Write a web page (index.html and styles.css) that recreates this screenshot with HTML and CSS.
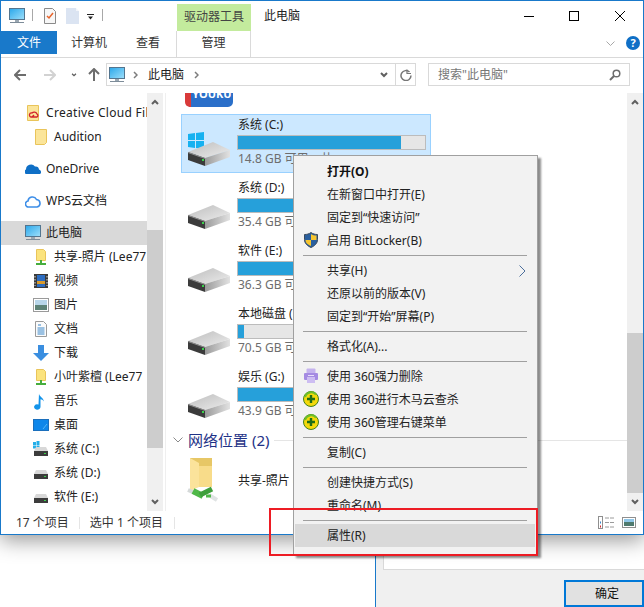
FILE: index.html
```html
<!DOCTYPE html>
<html lang="zh-CN">
<head>
<meta charset="utf-8">
<title>此电脑</title>
<link rel="stylesheet" href="styles.css">
</head>
<body>
<svg class="defs" aria-hidden="true">
  <defs>
    <linearGradient id="gTop" x1="0" y1="0" x2="1" y2="1"><stop offset="0" stop-color="#bdbdbd"/><stop offset="1" stop-color="#ececec"/></linearGradient>
    <linearGradient id="gSide" x1="0" y1="0" x2="1" y2="0"><stop offset="0" stop-color="#9a9a9a"/><stop offset="1" stop-color="#e2e2e2"/></linearGradient>
    <linearGradient id="gScreen" x1="0" y1="0" x2="1" y2="1"><stop offset="0" stop-color="#2aa7ea"/><stop offset="1" stop-color="#9fe0fb"/></linearGradient>
    <symbol id="drive" viewBox="0 0 42 24">
      <polygon points="0,10 25,0 42,8 17,16" fill="url(#gTop)"/>
      <polygon points="0,10 17,16 17,24 0,18" fill="#3b3b3b"/>
      <polygon points="0,10 17,16 17,17 0,11" fill="#8f8f8f"/>
      <polygon points="17,16 42,8 42,15 17,24" fill="url(#gSide)"/>
      <rect x="14" y="17" width="2" height="2" fill="#39d34b"/>
    </symbol>
    <symbol id="mini" viewBox="0 0 14 9">
      <path d="M2 0h10l2 4H0z" fill="#d8d8d8"/>
      <rect x="0" y="4" width="14" height="5" fill="#3c3c3c"/>
      <rect x="10" y="6" width="2" height="1" fill="#39d34b"/>
    </symbol>
    <symbol id="monitor" viewBox="0 0 16 16">
      <rect x="0.5" y="0.5" width="15" height="11" fill="url(#gScreen)" stroke="#53758f"/>
      <rect x="6" y="12" width="4" height="2" fill="#9aa7b2"/>
      <rect x="1" y="14" width="14" height="1" fill="#7d8c99"/>
    </symbol>
    <symbol id="folder" viewBox="0 0 12 16">
      <path d="M0.5 0.5h11v13l-2 2h-9z" fill="#fbe59a" stroke="#e9c45a"/>
    </symbol>
    <symbol id="sharefolder" viewBox="0 0 10 16">
      <path d="M0.5 0.5h7l2 2v9h-9z" fill="#fbe37d" stroke="#e9c45a"/>
      <rect x="4" y="11" width="2" height="3" fill="#47ad3d"/>
      <rect x="0" y="14" width="10" height="2" fill="#47ad3d"/>
    </symbol>
    <symbol id="pluscircle" viewBox="0 0 16 16">
      <circle cx="8" cy="8" r="7.5" fill="#f4d90a" stroke="#41811b"/>
      <path d="M2 6a6.500 6.500 0 0 1 11-2.500" fill="none" stroke="#6cbf2a" stroke-width="2"/>
      <path d="M8 4v8M4 8h8" stroke="#1f6d16" stroke-width="2.400"/>
    </symbol>
    <symbol id="chev-up" viewBox="0 0 8 6"><path d="M1 5l3-3 3 3" fill="none" stroke="#606060" stroke-width="2"/></symbol>
    <symbol id="chev-down" viewBox="0 0 8 6"><path d="M1 1l3 3 3-3" fill="none" stroke="#606060" stroke-width="2"/></symbol>
    <symbol id="crumb" viewBox="0 0 5 8"><path d="M1 1l3 3-3 3" fill="none" stroke="#7d7d7d" stroke-width="1.500"/></symbol>
  </defs>
</svg>

<div class="page">
  <div class="window">
    <div class="titlebar">
      <svg class="qa-monitor" width="16" height="16"><use href="#monitor"/></svg>
      <span class="qa-sep"></span>
      <svg class="qa-note" width="12" height="16" viewBox="0 0 12 16">
        <path d="M0.500 0.500h8l3 3v12h-11z" fill="#f7f7f7" stroke="#8a8a8a"/>
        <path d="M3 8l2 2 4-5" fill="none" stroke="#e8632a" stroke-width="1.500"/>
      </svg>
      <svg class="qa-doc" width="13" height="16" viewBox="0 0 13 16">
        <path d="M0 0h10v3h3v13H0z" fill="#dbe4f2"/><path d="M10 0l3 3h-3z" fill="#f2f5fa"/>
      </svg>
      <svg class="qa-drop" width="7" height="6" viewBox="0 0 7 6">
        <rect width="7" height="1" fill="#222"/><path d="M1 2.500h5L3.500 5.500z" fill="#222"/>
      </svg>
      <span class="qa-sep qa-sep-end"></span>
      <div class="tool-tab">驱动器工具</div>
      <div class="window-title">此电脑</div>
      <div class="controls">
        <svg width="10" height="10" viewBox="0 0 10 10"><rect y="5" width="10" height="1" fill="#000"/></svg>
        <svg width="10" height="10" viewBox="0 0 10 10"><rect x="0.500" y="0.500" width="9" height="9" fill="none" stroke="#000"/></svg>
        <svg width="10" height="10" viewBox="0 0 10 10"><path d="M0 0l10 10M10 0L0 10" stroke="#000" stroke-width="1"/></svg>
      </div>
    </div>

    <div class="tabs">
      <div class="tab-file">文件</div>
      <div class="tab tab-computer">计算机</div>
      <div class="tab tab-view">查看</div>
      <div class="tab-manage">管理</div>
      <svg class="ribbon-chev" width="9" height="5" viewBox="0 0 9 5"><path d="M0.500 0.500l4 4 4-4" fill="none" stroke="#a8a8a8"/></svg>
      <div class="help">?</div>
    </div>

    <div class="navbar">
      <svg class="nav-back" width="12" height="12" viewBox="0 0 12 12"><path d="M6 1L1 6l5 5M1 6h11" fill="none" stroke="#6d6d6d" stroke-width="2"/></svg>
      <svg class="nav-forward" width="12" height="12" viewBox="0 0 12 12"><path d="M6 1l5 5-5 5M11 6H0" fill="none" stroke="#d2d2d2" stroke-width="2"/></svg>
      <svg class="nav-recent" width="6" height="4" viewBox="0 0 8 6"><use href="#chev-down"/></svg>
      <svg class="nav-up" width="12" height="13" viewBox="0 0 12 13"><path d="M1 6l5-5 5 5M6 1v12" fill="none" stroke="#6d6d6d" stroke-width="2"/></svg>
      <div class="address">
        <svg class="addr-icon" width="16" height="16"><use href="#monitor"/></svg>
        <svg class="addr-crumb" width="5" height="8"><use href="#crumb"/></svg>
        <span class="addr-text">此电脑</span>
        <svg class="addr-crumb" width="5" height="8"><use href="#crumb"/></svg>
        <svg class="addr-drop" width="8" height="6"><use href="#chev-down"/></svg>
        <div class="addr-refresh">
          <svg width="12" height="12" viewBox="0 0 12 12"><path d="M9.500 3A5 5 0 1 0 11 6.500" fill="none" stroke="#777" stroke-width="1.500"/><path d="M7 0.500v4h4" fill="none" stroke="#777" stroke-width="1.200"/></svg>
        </div>
      </div>
      <div class="search">
        <span>搜索"此电脑"</span>
        <svg width="12" height="12" viewBox="0 0 12 12"><circle cx="7.500" cy="4.500" r="3.300" fill="none" stroke="#6d6d6d" stroke-width="1.500"/><path d="M5 7l-4 4" stroke="#6d6d6d" stroke-width="2"/></svg>
      </div>
    </div>

    <div class="body">
      <nav class="sidebar">
        <div class="row row-top row-first">
          <svg width="16" height="16" viewBox="0 0 16 16"><path d="M2.500 0.500h11v15h-11z" fill="#fbe59a" stroke="#e9c45a"/><path d="M6 12a2 2 0 0 1 1-4 3 3 0 0 1 5 1 1.700 1.700 0 0 1 0 3z M9 10l-2 2" fill="none" stroke="#d2232a" stroke-width="1.300"/></svg>
          <span>Creative Cloud Files</span>
        </div>
        <div class="row">
          <svg width="16" height="16" viewBox="-2 0 16 16"><use href="#folder" width="12" height="16"/></svg>
          <span>Audition</span>
        </div>
        <div class="row row-top row-onedrive">
          <svg width="16" height="16" viewBox="0 0 16 16"><path d="M1 13a2.500 2.500 0 0 1 0-4.500 5 5 0 0 1 9-3 3.500 3.500 0 0 1 4 3 2.500 2.500 0 0 1 1 4.500z" fill="#0f6fc6"/></svg>
          <span>OneDrive</span>
        </div>
        <div class="row row-top row-wps">
          <svg width="16" height="16" viewBox="0 0 16 16"><path d="M4 14a3 3 0 0 1-1-6 4.500 4.500 0 0 1 8.500-1.500A3.800 3.800 0 0 1 12 14z" fill="none" stroke="#3d8ee8" stroke-width="1.600"/></svg>
          <span>WPS云文档</span>
        </div>
        <div class="row row-top row-pc">
          <svg width="16" height="16"><use href="#monitor"/></svg>
          <span>此电脑</span>
        </div>
        <div class="row">
          <svg width="16" height="16" viewBox="-3 0 16 16"><use href="#sharefolder" width="10" height="16"/></svg>
          <span>共享-照片 (Lee77</span>
        </div>
        <div class="row">
          <svg width="16" height="16" viewBox="0 0 16 16"><rect x="1" y="1" width="14" height="14" fill="#3a3a3a"/><rect x="4" y="2" width="8" height="12" fill="#2d6cc0"/><rect x="4" y="8" width="8" height="3" fill="#d99a2b"/><path d="M2 3v10M14 3v10" stroke="#ddd" stroke-dasharray="1.500 1.500"/></svg>
          <span>视频</span>
        </div>
        <div class="row">
          <svg width="16" height="16" viewBox="0 0 16 16"><rect x="0.500" y="1.500" width="15" height="13" fill="#fff" stroke="#9a9a9a"/><rect x="2" y="3" width="12" height="5" fill="#b8d6ea"/><rect x="2" y="8" width="12" height="5" fill="#5d8277"/></svg>
          <span>图片</span>
        </div>
        <div class="row">
          <svg width="16" height="16" viewBox="0 0 16 16"><path d="M2.500 0.500h8l3 3v12h-11z" fill="#fbfbfb" stroke="#9a9a9a"/><path d="M5 4h3M4.500 7h7M4.500 9h7M4.500 11h7M4.500 13h7" stroke="#3a87c9"/></svg>
          <span>文档</span>
        </div>
        <div class="row">
          <svg width="16" height="16" viewBox="0 0 16 16"><path d="M5 0h6v8h5l-8 8-8-8h5z" fill="#3a8ee0"/></svg>
          <span>下载</span>
        </div>
        <div class="row">
          <svg width="16" height="16" viewBox="-3 0 16 16"><use href="#sharefolder" width="10" height="16"/></svg>
          <span>小叶紫檀 (Lee77</span>
        </div>
        <div class="row">
          <svg width="16" height="17" viewBox="0 0 16 17"><path d="M6 0.500c0 3 4.500 4 5 8-1-1.500-2.500-2-3.500-2.200V14a3.200 2.700 0 1 1-2-2.500z" fill="#1494ea"/></svg>
          <span>音乐</span>
        </div>
        <div class="row">
          <svg width="16" height="12" viewBox="0 0 16 12"><rect width="16" height="12" fill="#0f87ea"/><rect x="0.500" y="0.500" width="15" height="11" fill="none" stroke="#1b6fbc"/><path d="M10 10l4-5" stroke="#58b6f5"/></svg>
          <span>桌面</span>
        </div>
        <div class="row">
          <svg width="16" height="16" viewBox="0 0 16 16"><g fill="#25aee8"><rect x="0" y="1" width="3" height="3"/><rect x="3.500" y="0" width="3" height="4"/><rect x="0" y="4.500" width="3" height="3"/><rect x="3.500" y="4.500" width="3" height="3.500"/></g><use href="#mini" x="1" y="6" width="14" height="9"/></svg>
          <span>系统 (C:)</span>
        </div>
        <div class="row">
          <svg width="16" height="16" viewBox="0 0 16 16"><use href="#mini" x="1" y="5" width="14" height="9"/></svg>
          <span>系统 (D:)</span>
        </div>
        <div class="row">
          <svg width="16" height="16" viewBox="0 0 16 16"><use href="#mini" x="1" y="5" width="14" height="9"/></svg>
          <span>软件 (E:)</span>
        </div>
      </nav>
      <div class="scrollbar scrollbar-left">
        <svg class="sb-up" width="8" height="6"><use href="#chev-up"/></svg>
        <div class="sb-space-left"></div>
        <div class="sb-thumb sb-thumb-left"></div>
        <div class="sb-fill"></div>
        <svg class="sb-down" width="8" height="6"><use href="#chev-down"/></svg>
      </div>
      <div class="divider"></div>

      <main class="main">
        <div class="app-icon"><span>YOUKU</span></div>
        <div class="drive drive-selected">
          <svg class="drive-icon" width="44" height="34" viewBox="0 0 44 34">
            <g fill="#16b1f0"><polygon points="0,2 7,1 7,8 0,8"/><polygon points="8,1 16,0 16,8 8,8"/><polygon points="0,9 7,9 7,16 0,15"/><polygon points="8,9 16,9 16,17 8,16"/></g>
            <use href="#drive" y="10" width="42" height="24"/>
          </svg>
          <div class="drive-info">
            <div class="drive-name">系统 (C:)</div>
            <div class="bar"><div class="bar-fill fill-c"></div></div>
            <div class="drive-free">14.8 GB 可用，共</div>
          </div>
        </div>
        <div class="drive">
          <svg class="drive-icon" width="44" height="34" viewBox="0 0 44 34"><use href="#drive" y="10" width="42" height="24"/></svg>
          <div class="drive-info">
            <div class="drive-name">系统 (D:)</div>
            <div class="bar"><div class="bar-fill fill-d"></div></div>
            <div class="drive-free">35.4 GB 可用</div>
          </div>
        </div>
        <div class="drive">
          <svg class="drive-icon" width="44" height="34" viewBox="0 0 44 34"><use href="#drive" y="10" width="42" height="24"/></svg>
          <div class="drive-info">
            <div class="drive-name">软件 (E:)</div>
            <div class="bar"><div class="bar-fill fill-d"></div></div>
            <div class="drive-free">36.3 GB 可用</div>
          </div>
        </div>
        <div class="drive">
          <svg class="drive-icon" width="44" height="34" viewBox="0 0 44 34"><use href="#drive" y="10" width="42" height="24"/></svg>
          <div class="drive-info">
            <div class="drive-name">本地磁盘 (F:)</div>
            <div class="bar"><div class="bar-fill fill-f"></div></div>
            <div class="drive-free">70.5 GB 可用</div>
          </div>
        </div>
        <div class="drive">
          <svg class="drive-icon" width="44" height="34" viewBox="0 0 44 34"><use href="#drive" y="10" width="42" height="24"/></svg>
          <div class="drive-info">
            <div class="drive-name">娱乐 (G:)</div>
            <div class="bar"><div class="bar-fill fill-d"></div></div>
            <div class="drive-free">43.9 GB 可用</div>
          </div>
        </div>
        <div class="section">
          <svg width="10" height="6" viewBox="0 0 10 6"><path d="M0.500 0.500L5 5l4.500-4.500" fill="none" stroke="#8a8a8a"/></svg>
          <span class="section-title">网络位置 (2)</span>
          <span class="section-line"></span>
        </div>
        <div class="net-item">
          <svg width="34" height="46" viewBox="0 0 34 46">
            <path d="M5 0h22v28H5z" fill="#e7c766"/>
            <path d="M5 0l9 5v24l-9 4z" fill="#fbe39b"/>
            <path d="M14 8h13v21H14z" fill="#f8dc8a"/>
            <path d="M3 32l7 3" stroke="#d5d9d9" stroke-width="4"/>
            <path d="M8 33l10 5" stroke="#4fb848" stroke-width="6"/>
            <path d="M15 37l12-6" stroke="#3f9f3c" stroke-width="5"/>
            <path d="M24 37l8 5" stroke="#dfe3e3" stroke-width="4"/>
            <path d="M21 38l5 0" stroke="#4fb848" stroke-width="3"/>
          </svg>
          <span>共享-照片 (Lee77)</span>
        </div>
      </main>
      <div class="scrollbar scrollbar-right">
        <svg class="sb-up" width="8" height="6"><use href="#chev-up"/></svg>
        <div class="sb-space-right"></div>
        <div class="sb-thumb sb-thumb-right"></div>
        <svg class="sb-down" width="8" height="6"><use href="#chev-down"/></svg>
      </div>
    </div>

    <div class="status">
      <span class="status-a">17 个项目</span>
      <span class="status-sep"></span>
      <span class="status-b">选中 1 个项目</span>
      <span class="status-sep"></span>
      <svg class="view-details" width="17" height="13" viewBox="0 0 17 13">
        <rect x="0.500" y="0.500" width="4" height="12" fill="#fff" stroke="#8f8f8f"/>
        <path d="M7 2h10M7 6.500h10M7 11h10" stroke="#9a9a9a" stroke-dasharray="4 1"/>
        <rect x="2" y="5.500" width="1" height="2" fill="#3a87c9"/><rect x="2" y="9.500" width="1" height="2" fill="#d2232a"/>
      </svg>
      <svg class="view-thumb" width="14" height="11" viewBox="0 0 14 11">
        <rect x="0.500" y="0.500" width="13" height="10" fill="#fff" stroke="#8f8f8f"/>
        <rect x="2" y="2" width="10" height="3" fill="#8fc6e8"/><rect x="2" y="5" width="10" height="4" fill="#4f7a6e"/>
      </svg>
    </div>
  </div>

  <div class="below">
    <div class="blank"></div>
    <div class="dialog">
      <div class="dialog-sheet"></div>
      <div class="dialog-actions"><div class="ok">确定</div></div>
    </div>
  </div>

  <div class="menu">
    <div class="mi mi-bold"><span>打开(O)</span></div>
    <div class="mi"><span>在新窗口中打开(E)</span></div>
    <div class="mi"><span>固定到“快速访问”</span></div>
    <div class="mi">
      <svg class="mi-icon" width="16" height="16" viewBox="0 0 16 16">
        <path d="M8 0.500c2 1.500 4 2 6.500 2v5c0 4-3 6.500-6.500 8-3.500-1.500-6.500-4-6.500-8v-5c2.500 0 4.500-.5 6.500-2z" fill="#2a5f9e" stroke="#3b4a5c"/>
        <path d="M8 2v6h5.500v-4.500c-2 0-4-.5-5.500-1.500zM8 8v6c-3-1.200-5.500-3-5.500-6z" fill="#f7c52e"/>
      </svg>
      <span>启用 BitLocker(B)</span>
    </div>
    <div class="msep"></div>
    <div class="mi mi-sub"><span>共享(H)</span>
      <svg class="mi-arrow" width="7" height="12" viewBox="0 0 7 12"><path d="M0.500 0.500L6 6l-5.500 5.500" fill="none" stroke="#4c6f9c"/></svg>
    </div>
    <div class="mi"><span>还原以前的版本(V)</span></div>
    <div class="mi"><span>固定到“开始”屏幕(P)</span></div>
    <div class="msep"></div>
    <div class="mi"><span>格式化(A)...</span></div>
    <div class="msep"></div>
    <div class="mi">
      <svg class="mi-icon" width="16" height="16" viewBox="0 0 16 16">
        <rect x="3.500" y="0.500" width="9" height="5" rx="1" fill="#c5b3ee"/><rect x="1" y="5" width="14" height="7" rx="1" fill="#a58be2"/><rect x="4" y="9" width="8" height="6" fill="#cdbdf2"/><rect x="5" y="7" width="6" height="1" fill="#e8e0fa"/>
      </svg>
      <span>使用 360强力删除</span>
    </div>
    <div class="mi"><svg class="mi-icon" width="16" height="16"><use href="#pluscircle"/></svg><span>使用 360进行木马云查杀</span></div>
    <div class="mi"><svg class="mi-icon" width="16" height="16"><use href="#pluscircle"/></svg><span>使用 360管理右键菜单</span></div>
    <div class="msep"></div>
    <div class="mi"><span>复制(C)</span></div>
    <div class="msep"></div>
    <div class="mi"><span>创建快捷方式(S)</span></div>
    <div class="mi"><span>重命名(M)</span></div>
    <div class="msep"></div>
    <div class="mi mi-hover"><span>属性(R)</span></div>
  </div>
  <div class="callout"></div>
</div>
</body>
</html>
```
FILE: styles.css
```css
* { box-sizing: border-box; }
html, body { margin: 0; padding: 0; }
body {
  background: #fff;
  color: #1e1e1e;
  font: 12px/16px "Noto Sans", "Noto Sans CJK SC", sans-serif;
  overflow: hidden;
}
svg { display: block; flex: none; }
.defs { position: absolute; width: 0; height: 0; }

.page { position: relative; width: 644px; height: 607px; overflow: hidden; }

/* window */
.window {
  position: relative;
  z-index: 1;
  width: 644px;
  height: 535px;
  background: #fff;
  border: 1px solid #1979ca;
  box-shadow: 0 5px 20px rgba(0, 0, 0, .42);
  display: flex;
  flex-direction: column;
}

/* title bar */
.titlebar { height: 30px; display: flex; align-items: center; flex: none; }
.qa-monitor { margin-left: 8px; margin-top: -1px; }
.qa-sep { width: 1px; height: 12px; background: #a8a8a8; margin-left: 7px; margin-top: -2px; }
.qa-note { margin-left: 11px; margin-top: -1px; }
.qa-doc { margin-left: 10px; margin-top: -1px; }
.qa-drop { margin-left: 8px; margin-top: 1px; }
.qa-sep-end { margin-left: 8px; }
.tool-tab {
  align-self: flex-end;
  width: 74px;
  height: 27px;
  margin-left: 74px;
  background: #c3eb9d;
  color: #444;
  text-align: center;
  line-height: 26px;
}
.window-title { margin-left: 13px; margin-top: 0; color: #222; }
.controls { margin-left: auto; margin-right: 18px; display: flex; gap: 35px; }
.controls svg:nth-child(2) { margin-right: 1px; }

/* tabs */
.tabs {
  height: 27px;
  flex: none;
  display: flex;
  align-items: flex-start;
  border-bottom: 1px solid #d9d9d9;
  position: relative;
}
.tab-file { width: 56px; height: 23px; background: #1979ca; color: #fff; text-align: center; line-height: 23px; }
.tab { line-height: 23px; color: #333; }
.tab-computer { margin-left: 14px; }
.tab-view { margin-left: 29px; }
.tab-manage {
  width: 75px;
  height: 26px;
  margin-left: 16px;
  background: #fff;
  border: 1px solid #dadada;
  border-width: 0 1px;
  text-align: center;
  line-height: 23px;
  color: #333;
}
.ribbon-chev { margin-left: auto; margin-top: 10px; }
.help {
  width: 14px;
  height: 14px;
  margin: 5px 3px 0 11px;
  border-radius: 50%;
  background: #0f6fc6;
  color: #fff;
  font-weight: 700;
  font-size: 11px;
  line-height: 14px;
  text-align: center;
}

/* navigation */
.navbar { height: 35px; flex: none; display: flex; align-items: flex-start; padding-top: 5px; }
.nav-back { margin: 6px 0 0 13px; }
.nav-forward { margin: 6px 0 0 18px; }
.nav-recent { margin: 10px 0 0 15px; }
.nav-up { margin: 5px 0 0 11px; }
.address {
  width: 310px;
  height: 23px;
  margin-left: 6px;
  border: 1px solid #d9d9d9;
  display: flex;
  align-items: center;
}
.addr-icon { margin-left: 2px; }
.addr-crumb { margin-left: 8px; }
.addr-text { margin-left: 10px; color: #222; }
.addr-text + .addr-crumb { margin-left: 10px; }
.addr-drop { margin-left: auto; margin-right: 7px; }
.addr-refresh {
  width: 20px;
  height: 100%;
  border-left: 1px solid #d9d9d9;
  display: flex;
  align-items: center;
  justify-content: center;
}
.search {
  width: 202px;
  height: 23px;
  margin-left: 12px;
  border: 1px solid #d9d9d9;
  display: flex;
  align-items: center;
  justify-content: space-between;
  padding: 0 8px 0 9px;
  color: #777;
}

/* body */
.body { height: 418px; flex: none; display: flex; }
.sidebar { width: 146px; flex: none; overflow: hidden; padding-top: 8px; color: #222; }
.row {
  height: 24px;
  display: flex;
  align-items: center;
  gap: 5px;
  padding-left: 32px;
  white-space: nowrap;
}
.row-top { padding-left: 24px; }
.row-first span { letter-spacing: .3px; }
.row-onedrive { margin-top: 8px; }
.row-wps { margin-top: 8px; }
.row-pc { margin-top: 8px; background: #d9d9d9; }

.scrollbar {
  width: 16px;
  flex: none;
  background: #f0f0f0;
  display: flex;
  flex-direction: column;
  align-items: center;
}
.sb-up { margin-top: 6px; margin-bottom: 6px; }
.sb-down { margin-top: 6px; margin-bottom: 6px; }
.sb-thumb { width: 16px; background: #cdcdcd; }
.sb-space-left { height: 119px; flex: none; }
.sb-thumb-left { height: 218px; flex: none; }
.sb-fill { flex: 1; }
.sb-space-right { height: 222px; flex: none; }
.sb-thumb-right { flex: 1; }
.divider { width: 1px; margin-left: 2px; background: #efefef; flex: none; }

/* main */
.main { flex: 1; min-width: 0; overflow: hidden; padding-left: 15px; color: #222; }
.app-icon {
  width: 48px;
  height: 14px;
  margin-left: 4px;
  margin-bottom: 7px;
  background: #2a6fc9;
  border-left: 6px solid #d93a3a;
  border-radius: 0 0 5px 5px;
  overflow: hidden;
  color: #fff;
  font-weight: 700;
  font-size: 11px;
  line-height: 2px;
  text-align: center;
}
.drive {
  width: 250px;
  height: 59px;
  margin-bottom: 4px;
  border: 1px solid transparent;
  display: flex;
  padding-left: 6px;
}
.drive-selected { background: #cce8ff; border-color: #99d1ff; }
.drive-icon { margin-top: 17px; }
.drive-info { margin-left: 6px; }
.drive-name { height: 20px; line-height: 20px; white-space: nowrap; }
.bar { width: 189px; height: 15px; margin-left: -1px; background: #e6e6e6; border: 1px solid #bcbcbc; }
.bar-fill { height: 100%; background: #26a0da; }
.fill-c { width: 163px; }
.fill-d { width: 170px; }
.fill-f { width: 6px; }
.drive-free { height: 18px; line-height: 18px; color: #6d6d6d; white-space: nowrap; }

.section { height: 22px; margin-top: 1px; display: flex; align-items: center; margin-left: -8px; margin-right: 0; }
.section-title { font-size: 15px; color: #1e3287; margin-left: 5px; white-space: nowrap; }
.section-line { flex: 1; height: 1px; background: #e5e5e5; margin-left: 5px; }
.net-item { display: flex; align-items: center; margin-top: 7px; margin-left: 4px; gap: 19px; white-space: nowrap; }

/* status bar */
.status { flex: 1; display: flex; align-items: center; color: #333; padding-left: 15px; }
.status-sep { width: 1px; height: 12px; background: #e5e5e5; }
.status-a { margin-right: 10px; }
.status-b { margin-left: 10px; margin-right: 11px; }
.view-details { margin-left: auto; margin-right: 7px; }
.view-thumb { margin-right: 7px; }

/* below */
.below { height: 72px; display: flex; }
.blank { width: 375px; flex: none; background: #fff; }
.dialog { flex: 1; background: #f0f0f0; border-left: 1px solid #1979ca; }
.dialog-sheet { height: 35px; margin-left: 7px; background: #fff; border: 1px solid #d9d9d9; border-width: 0 0 1px 1px; }
.dialog-actions { display: flex; justify-content: flex-end; margin-top: 10px; }
.ok {
  width: 80px;
  height: 27px;
  padding-left: 6px;
  background: #e1e1e1;
  border: 2px solid #0078d7;
  text-align: center;
  line-height: 23px;
  color: #111;
}

/* context menu */
.menu {
  position: absolute;
  z-index: 2;
  left: 293px;
  top: 155px;
  width: 245px;
  height: 400px;
  padding: 4px 2px 0 1px;
  background: #f2f2f2;
  border: 1px solid #a0a0a0;
  box-shadow: 3px 3px 2px rgba(0, 0, 0, .45);
  color: #222;
}
.mi { height: 23px; position: relative; display: flex; align-items: center; padding-left: 32px; white-space: nowrap; }
.mi-bold { font-weight: 700; color: #111; }
.mi-icon { position: absolute; left: 8px; top: 3px; }
.mi-arrow { margin-left: auto; margin-right: 9px; }
.msep { height: 1px; margin: 3px 8px; background: #a0a0a0; }
.mi-hover { background: #d9d9d9; }

.callout {
  position: absolute;
  z-index: 3;
  left: 269px;
  top: 508px;
  width: 269px;
  height: 48px;
  border: 2px solid #ed1c24;
}
```
